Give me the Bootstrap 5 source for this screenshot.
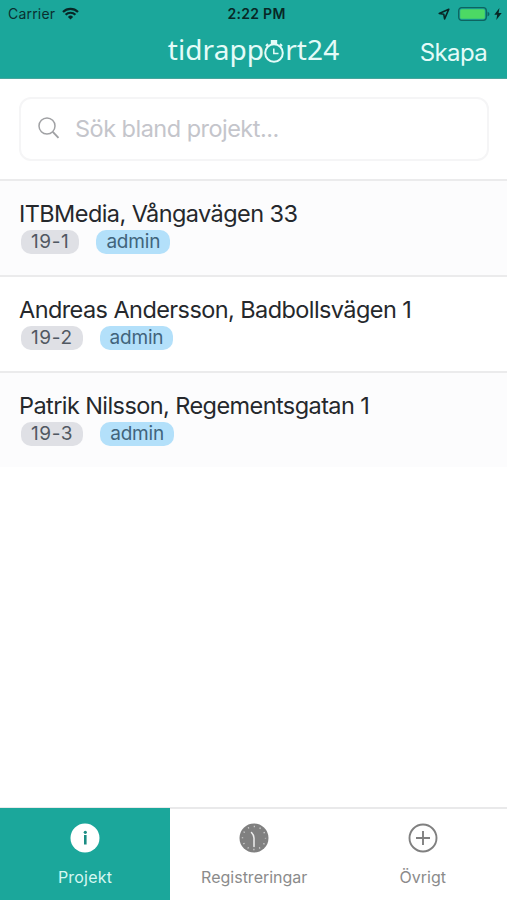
<!DOCTYPE html>
<html lang="sv">
<head>
<meta charset="utf-8">
<meta name="viewport" content="width=device-width, initial-scale=1">
<title>tidrapport24</title>
<link href="https://cdn.jsdelivr.net/npm/bootstrap@5.3.0/dist/css/bootstrap.min.css" rel="stylesheet">
<style>
:root { --teal: #1ba79b; }
body { font-family: Inter, "Liberation Sans", sans-serif; color: #25282c; background: #fff; }
.app { height: 900px; overflow: hidden; }
.app-top { background: var(--teal); height: 79px; border-bottom: 1px solid #48a59c; color: #e4fbf8; }
.status { height: 27px; padding: 0 5px 0 8px; color: #0a2f30; font-size: 14px; line-height: 27px; }
.carrier { letter-spacing: .2px; }
.wifi { margin-left: 7px; }
.clock-time { font-weight: 600; font-size: 14px; letter-spacing: .3px; color: #082726; margin-left: 3px; }
.side { flex: 1 1 0; }
.title-bar { height: 51px; padding: 0 20px; }
.logo { font-family: "Noto Sans", "Open Sans", sans-serif; font-size: 28px; line-height: 45px; height: 46px; letter-spacing: .1px; }
.logo svg { margin: 12px 1px 0 0; }
.create { font-size: 24px; line-height: 51px; color: #e4fbf8; letter-spacing: -.65px; }
.search-wrap { padding: 18px 18px 18px 19px; height: 100px; }
.search-box { height: 64px; border: 2px solid #f5f5f6; border-radius: 12px; padding: 0 17px; }
.search-box svg { margin-top: -3px; }
.search-box input { font-size: 23.5px; color: #25282c; padding: 0 0 0 15px; letter-spacing: -.52px; }
.search-box input::placeholder { color: #c4c5cb; opacity: 1; }
.project { height: 96px; border-top: 2px solid #ebebec; padding: 17px 19px 0; background: #fff; }
.project:nth-child(odd) { background: #fcfcfd; }
.project-name { font-size: 23.5px; line-height: 32px; letter-spacing: -.58px; white-space: nowrap; }
.tag { height: 24px; border-radius: 10px; font-size: 19px; line-height: 24px; padding: 0 10px; color: #515862; background: #dfe0e5; letter-spacing: .6px; }
.tag-user { background: #b3e0fa; color: #41647c; letter-spacing: -.2px; }
.tags { gap: 17px; padding-left: 2px; }
.tabs { height: 93px; border-top: 2px solid #e9e9ea; }
.tab { flex: 1 1 0; color: #8b8b8b; font-size: 16px; line-height: 24px; padding-top: 14px; text-decoration: none; }
.tab-on { background: var(--teal); color: #d5f7f2; margin-top: -1px; padding-top: 15px; flex: 0 0 170px; }
.tab-on span { letter-spacing: .2px; }
.tab svg { margin-bottom: 12px; }
</style>
<script src="https://cdn.jsdelivr.net/npm/bootstrap@5.3.0/dist/js/bootstrap.bundle.min.js"></script>
</head>
<body>
<div class="app d-flex flex-column">
  <header class="app-top flex-shrink-0">
    <div class="status d-flex align-items-center">
      <div class="side d-flex align-items-center">
        <span class="carrier">Carrier</span>
        <svg class="wifi" width="17" height="13" viewBox="0 0 17 13" fill="none" stroke="#082726" stroke-width="2.2"><path d="M1 5a10.6 10.6 0 0 1 15 0M3.6 7.8a6.9 6.9 0 0 1 9.8 0"/><path d="M8.500 12.500 5.900 9.900a3.700 3.700 0 0 1 5.200 0z" fill="#082726" stroke="none"/></svg>
      </div>
      <span class="clock-time">2:22 PM</span>
      <div class="side d-flex align-items-center justify-content-end">
        <svg width="12" height="12" viewBox="0 0 12 12" fill="none" stroke="#082726" stroke-width="1.600" stroke-linejoin="round"><path d="M10.800 1.200 1.200 5.500 5.800 6.300 6.600 10.900z"/></svg>
        <svg class="ms-2" width="32" height="14" viewBox="0 0 32 14"><rect x=".7" y=".7" width="27.600" height="12.600" rx="3" fill="none" stroke="#0d6460" stroke-width="1.300"/><rect x="2.200" y="2.200" width="24.600" height="9.600" rx="1.500" fill="#4cd964"/><path d="M29.500 4.500q2 1 2 2.500t-2 2.500z" fill="#0d6460"/></svg>
        <svg class="ms-1" width="8" height="12" viewBox="0 0 8 12"><path d="M5.400 0 .3 6.700h2.900L2.300 12 7.700 5H4.600z" fill="#082726"/></svg>
      </div>
    </div>
    <div class="title-bar d-flex">
      <div class="side"></div>
      <div class="logo d-flex" aria-label="tidrapport24"><span class="logo-a">tidrapp</span><svg width="20" height="24" viewBox="0 0 20 24" fill="none" stroke="#e4fbf8"><circle cx="10" cy="14" r="8.800" stroke-width="2"/><path d="M6.800 3h6.400" stroke-width="4"/><path d="m16 5 2 2M4 5 2 7" stroke-width="2"/><path d="M9.800 9.500v5h4.700" stroke-width="1.500"/></svg><span class="logo-b">rt24</span></div>
      <div class="side text-end"><span class="create">Skapa</span></div>
    </div>
  </header>
  <main class="flex-grow-1">
    <div class="search-wrap">
      <div class="search-box d-flex align-items-center">
        <svg class="flex-shrink-0" width="22" height="22" viewBox="0 0 22 22" fill="none" stroke="#a0a1a4" stroke-width="1.500"><circle cx="9" cy="9" r="8"/><path d="m14.800 14.800 5.700 6" stroke-width="1.900"/></svg>
        <input class="form-control border-0 bg-transparent shadow-none" type="text" placeholder="Sök bland projekt...">
      </div>
    </div>
    <div class="projects">
      <div class="project"><div class="project-name"><span>ITBMedia, Vångavägen 33</span></div><div class="tags d-flex"><span class="tag">19-1</span><span class="tag tag-user">admin</span></div></div>
      <div class="project"><div class="project-name"><span>Andreas Andersson, Badbollsvägen 1</span></div><div class="tags d-flex"><span class="tag">19-2</span><span class="tag tag-user">admin</span></div></div>
      <div class="project"><div class="project-name"><span>Patrik Nilsson, Regementsgatan 1</span></div><div class="tags d-flex"><span class="tag">19-3</span><span class="tag tag-user">admin</span></div></div>
    </div>
  </main>
  <nav class="tabs d-flex flex-shrink-0">
    <a class="tab tab-on d-flex flex-column align-items-center" href="#"><svg width="30" height="30" viewBox="0 0 30 30"><circle cx="15" cy="15" r="14.500" fill="#fff"/><g fill="#1b8d84"><circle cx="15.300" cy="9.300" r="1.600"/><path d="M14 12h2.600v9.500H14z"/></g></svg><span>Projekt</span></a>
    <a class="tab d-flex flex-column align-items-center" href="#"><svg width="30" height="30" viewBox="0 0 30 30" fill="none"><circle cx="15" cy="15" r="14.500" fill="#808080"/><circle cx="15" cy="15" r="11.500" stroke="#d0d0d0" stroke-width="1.400" stroke-dasharray="1.200 4.821" stroke-dashoffset=".6"/><path d="M12.500 9.500Q15 12 15 15V23.500" stroke="#ededed" stroke-width="1.500" stroke-linecap="round" stroke-linejoin="round"/></svg><span>Registreringar</span></a>
    <a class="tab d-flex flex-column align-items-center" href="#"><svg width="30" height="30" viewBox="0 0 30 30" fill="none" stroke="#808080" stroke-width="1.900"><circle cx="15" cy="15" r="13.500"/><path d="M15 8v14M8 15h14"/></svg><span>Övrigt</span></a>
  </nav>
</div>
</body>
</html>
